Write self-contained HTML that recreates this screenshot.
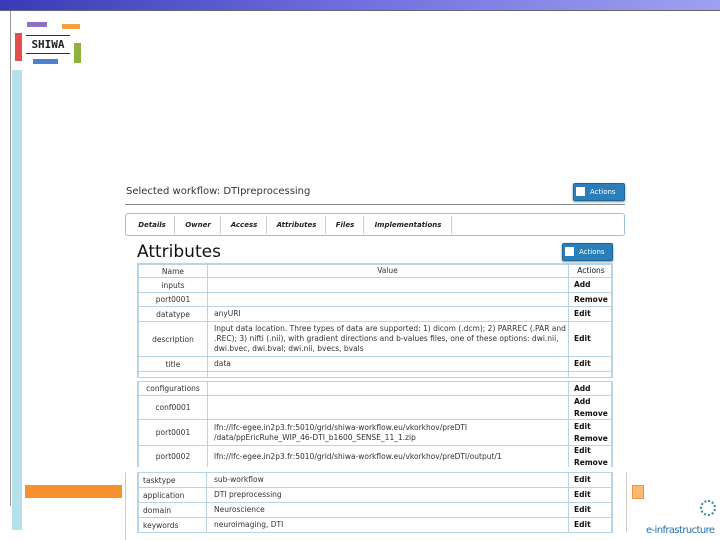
<!DOCTYPE html>
<html><head><meta charset="utf-8"><style>
body{margin:0;width:720px;height:540px;position:relative;background:#fff;font-family:"DejaVu Sans","Liberation Sans",sans-serif;overflow:hidden}
.a{position:absolute}
.r{position:absolute;left:137px;width:476px;border-left:2px solid #b8d4e8;border-right:2px solid #b8d4e8;border-bottom:1px solid #b8d4e8;box-sizing:border-box;font-size:7.5px;color:#333}
.r div{position:absolute;top:0;bottom:0;display:flex;align-items:center}
.n{left:0;width:68px;justify-content:center;border-right:1px solid #b8d4e8}
.v{left:69px;width:359px;padding-left:6px;box-sizing:border-box;line-height:10px}
.c{left:429px;width:45px;padding-left:5px;box-sizing:border-box;border-left:1px solid #b8d4e8;font-weight:bold;color:#111;line-height:12px}
.btn{position:absolute;background:#2a7fba;border:1px solid #1c6599;border-radius:2px;color:#fff;font-size:7px;box-shadow:0 1px 2px #888}
.btn i{position:absolute;left:2px;top:3px;width:9px;height:9px;background:#fff}
.btn span{position:absolute;left:16px;top:4px}
.tab{position:absolute;top:216px;height:18px;font-size:7px;font-weight:bold;font-style:italic;color:#222;border-right:1px solid #ccc;line-height:18px;text-align:center}
.lf{justify-content:flex-start!important;padding-left:4px;box-sizing:border-box}
</style></head><body>
<div class="a" style="left:0;top:0;width:720px;height:10px;background:linear-gradient(90deg,#3a3ab8,#7070e0 50%,#a0a0f0);border-bottom:1px solid #667"></div>
<div class="a" style="left:10px;top:11px;width:1px;height:495px;background:#999"></div>
<div class="a" style="left:12px;top:70px;width:10px;height:460px;background:#b5e2ea"></div>
<div class="a" style="left:25px;top:485px;width:97px;height:13px;background:#f7902e"></div>
<div class="a" style="left:632px;top:485px;width:10px;height:12px;background:#ffb870;border:1px solid #f09040"></div>
<div class="a" style="left:125px;top:472px;width:1px;height:68px;background:#ccc"></div>
<div class="a" style="left:626px;top:472px;width:1px;height:60px;background:#ccc"></div>
<!-- logo -->
<div class="a" style="left:27px;top:22px;width:20px;height:5px;background:#9070c0"></div>
<div class="a" style="left:62px;top:24px;width:18px;height:5px;background:#f7a040"></div>
<div class="a" style="left:15px;top:33px;width:7px;height:28px;background:#e05050"></div>
<div class="a" style="left:74px;top:43px;width:7px;height:20px;background:#90b040"></div>
<div class="a" style="left:33px;top:59px;width:25px;height:5px;background:#5080d0"></div>
<div class="a" style="left:26px;top:35px;width:44px;height:17px;border-top:1px solid #333;border-bottom:1px solid #333;font-size:11px;font-family:'DejaVu Sans Mono',monospace;font-weight:bold;text-align:center;line-height:17px;color:#222">SHIWA</div>
<div class="a" style="left:646px;top:525px;font-size:10px;color:#2070b0;letter-spacing:-0.6px;white-space:nowrap">e-infrastructure</div>
<div class="a" style="left:700px;top:500px;width:12px;height:12px;border:2px dotted #2a8aa0;border-radius:50%"></div>

<div class="a" style="left:126px;top:186px;font-size:10px;color:#333">Selected workflow: DTIpreprocessing</div>
<div class="a" style="left:125px;top:204px;width:500px;height:1px;background:#888"></div>
<div class="btn" style="left:573px;top:183px;width:50px;height:16px"><i></i><span>Actions</span></div>
<div class="a" style="left:125px;top:213px;width:498px;height:21px;border:1px solid #9cc0d8;border-radius:3px"></div>
<div class="tab" style="left:130px;width:44px">Details</div>
<div class="tab" style="left:176px;width:44px">Owner</div>
<div class="tab" style="left:222px;width:44px">Access</div>
<div class="tab" style="left:268px;width:57px">Attributes</div>
<div class="tab" style="left:327px;width:36px">Files</div>
<div class="tab" style="left:365px;width:86px">Implementations</div>
<div class="a" style="left:137px;top:242px;font-size:17px;color:#111">Attributes</div>
<div class="btn" style="left:562px;top:243px;width:49px;height:16px"><i></i><span>Actions</span></div>

<div class="r" style="top:263px;height:15px;border-top:2px solid #b8d4e8"><div class="n">Name</div><div class="v" style="justify-content:center;padding:0">Value</div><div class="c" style="font-weight:normal;justify-content:center;padding:0">Actions</div></div>
<div class="r" style="top:278px;height:15px"><div class="n">inputs</div><div class="v"></div><div class="c">Add</div></div>
<div class="r" style="top:293px;height:14px"><div class="n">port0001</div><div class="v"></div><div class="c">Remove</div></div>
<div class="r" style="top:307px;height:15px"><div class="n">datatype</div><div class="v">anyURI</div><div class="c">Edit</div></div>
<div class="r" style="top:322px;height:35px"><div class="n">description</div><div class="v">Input data location. Three types of data are supported: 1) dicom (.dcm); 2) PARREC (.PAR and .REC); 3) nifti (.nii), with gradient directions and b-values files, one of these options: dwi.nii, dwi.bvec, dwi.bval; dwi.nii, bvecs, bvals</div><div class="c">Edit</div></div>
<div class="r" style="top:357px;height:15px"><div class="n">title</div><div class="v">data</div><div class="c">Edit</div></div>
<div class="r" style="top:372px;height:6px"><div class="n"></div><div class="v"></div><div class="c"></div></div>
<div class="r" style="top:381px;height:15px;border-top:1px solid #b8d4e8"><div class="n">configurations</div><div class="v"></div><div class="c">Add</div></div>
<div class="r" style="top:396px;height:24px"><div class="n">conf0001</div><div class="v"></div><div class="c">Add<br>Remove</div></div>
<div class="r" style="top:420px;height:26px"><div class="n">port0001</div><div class="v">lfn://lfc-egee.in2p3.fr:5010/grid/shiwa-workflow.eu/vkorkhov/preDTI /data/ppEricRuhe_WIP_46-DTI_b1600_SENSE_11_1.zip</div><div class="c">Edit<br>Remove</div></div>
<div class="r" style="top:446px;height:21px;border-bottom:none"><div class="n">port0002</div><div class="v">lfn://lfc-egee.in2p3.fr:5010/grid/shiwa-workflow.eu/vkorkhov/preDTI/output/1</div><div class="c">Edit<br>Remove</div></div>
<div class="r" style="top:472px;height:16px;border-top:1px solid #b8d4e8"><div class="n lf">tasktype</div><div class="v">sub-workflow</div><div class="c">Edit</div></div>
<div class="r" style="top:488px;height:15px"><div class="n lf">application</div><div class="v">DTI preprocessing</div><div class="c">Edit</div></div>
<div class="r" style="top:503px;height:15px"><div class="n lf">domain</div><div class="v">Neuroscience</div><div class="c">Edit</div></div>
<div class="r" style="top:518px;height:15px"><div class="n lf">keywords</div><div class="v">neuroimaging, DTI</div><div class="c">Edit</div></div>
</body></html>
